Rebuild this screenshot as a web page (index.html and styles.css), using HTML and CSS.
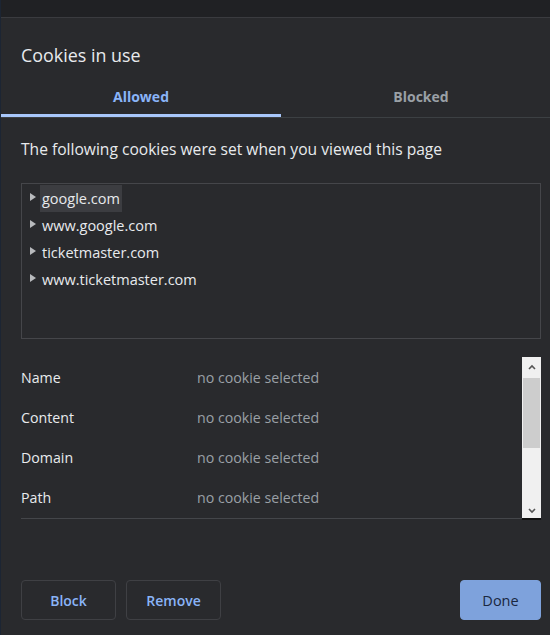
FILE: index.html
```html
<!DOCTYPE html>
<html>
<head>
<meta charset="utf-8">
<link rel="stylesheet" href="styles.css">
</head>
<body>
<div class="topband"></div>
<div class="dialog">
  <h1 class="title">Cookies in use</h1>
  <div class="tabs">
    <div class="tab active">Allowed</div>
    <div class="tab">Blocked</div>
  </div>
  <p class="intro">The following cookies were set when you viewed this page</p>
  <div class="tree">
    <div class="node"><span class="tri"></span><span class="label sel">google.com</span></div>
    <div class="node"><span class="tri"></span><span class="label">www.google.com</span></div>
    <div class="node"><span class="tri"></span><span class="label">ticketmaster.com</span></div>
    <div class="node"><span class="tri"></span><span class="label">www.ticketmaster.com</span></div>
  </div>
  <div class="details">
    <div class="rows">
      <div class="row"><span class="key">Name</span><span class="val">no cookie selected</span></div>
      <div class="row"><span class="key">Content</span><span class="val">no cookie selected</span></div>
      <div class="row"><span class="key">Domain</span><span class="val">no cookie selected</span></div>
      <div class="row"><span class="key">Path</span><span class="val">no cookie selected</span></div>
    </div>
    <div class="scrollbar">
      <svg class="arrow" width="18" height="14" viewBox="0 0 18 14"><path d="M6 9 L9 6 L12 9" fill="none" stroke="#555" stroke-width="1.6"/></svg>
      <div class="thumb"></div>
      <div class="track"></div>
      <svg class="arrow" width="18" height="14" viewBox="0 0 18 14"><path d="M6 5 L9 8 L12 5" fill="none" stroke="#555" stroke-width="1.6"/></svg>
    </div>
  </div>
  <div class="footer">
    <button class="btn">Block</button>
    <button class="btn">Remove</button>
    <span class="spacer"></span>
    <button class="btn primary">Done</button>
  </div>
</div>
</body>
</html>
```

FILE: styles.css
```css
* { box-sizing: border-box; }
html, body { margin: 0; padding: 0; }
body {
  width: 550px;
  height: 635px;
  background: #292a2d;
  font-family: "Open Sans", "Noto Sans", sans-serif;
  color: #e8eaed;
  overflow: hidden;
  border-left: 1px solid #1c2533;
}
.topband {
  height: 18px;
  background: #202124;
  border-bottom: 1px solid #3a3b3f;
}
.dialog {
  padding-top: 25px;
}
.title {
  margin: 0 0 0 20px;
  font-size: 17.9px;
  font-weight: 400;
  line-height: 24px;
  color: #e8eaed;
}
.tabs {
  display: flex;
  margin-top: 14px;
  margin-right: -11px;
  border-bottom: 1px solid #3c4043;
}
.tab {
  flex: 1;
  text-align: center;
  font-size: 14px;
  font-weight: 700;
  color: #9aa0a6;
  height: 36px;
  line-height: 32px;
}
.tab.active {
  color: #8ab4f8;
  border-bottom: 3px solid #a8c7fa;
  margin-bottom: -1px;
}
.intro {
  margin: 20px 0 0 20px;
  font-size: 15.6px;
  line-height: 22px;
}
.tree {
  margin: 23px 9px 0 20px;
  height: 156px;
  border: 1px solid #45464a;
  padding: 1px 0 0 7px;
}
.node {
  display: flex;
  align-items: center;
  height: 27px;
}
.tri {
  width: 0;
  height: 0;
  border-top: 4px solid transparent;
  border-bottom: 4px solid transparent;
  border-left: 6px solid #b8babd;
  margin: 0 4px 4px 1px;
}
.label {
  font-size: 14.5px;
  line-height: 27px;
  padding: 0 2px;
  color: #e8eaed;
}
.label.sel { background: #3c3d41; }
.details {
  display: flex;
  margin: 18px 9px 0 20px;
  height: 163px;
}
.rows {
  flex: 1;
  padding-top: 0;
  border-bottom: 1px solid #44464a;
  height: 162px;
}
.row {
  display: flex;
  height: 40px;
  align-items: center;
  font-size: 14.2px;
}
.key { width: 176px; color: #e8eaed; }
.val { color: #9aa0a6; }
.scrollbar {
  width: 19px;
  background: #f0f0f0;
  display: flex;
  flex-direction: column;
  align-items: center;
  border-bottom: 2px solid #111;
}
.arrow { display: block; flex: none; margin-top: 3px; }
.thumb {
  width: 17px;
  height: 70px;
  background: #cdcdcd;
  margin-top: 4px;
}
.track { flex: 1; }
.footer {
  display: flex;
  align-items: center;
  gap: 10px;
  margin: 60px 9px 0 20px;
}
.spacer { flex: 1; }
.btn {
  height: 40px;
  width: 95px;
  border: 1px solid #3f4044;
  border-radius: 4px;
  background: transparent;
  color: #8ab4f8;
  font-family: "Open Sans", "Noto Sans", sans-serif;
  font-size: 14px;
  font-weight: 600;
}
.btn.primary {
  width: 81px;
  background: #7ea2dc;
  border-color: #7ea2dc;
  color: #1a2740;
  font-size: 14.5px;
  font-weight: 500;
}
```
